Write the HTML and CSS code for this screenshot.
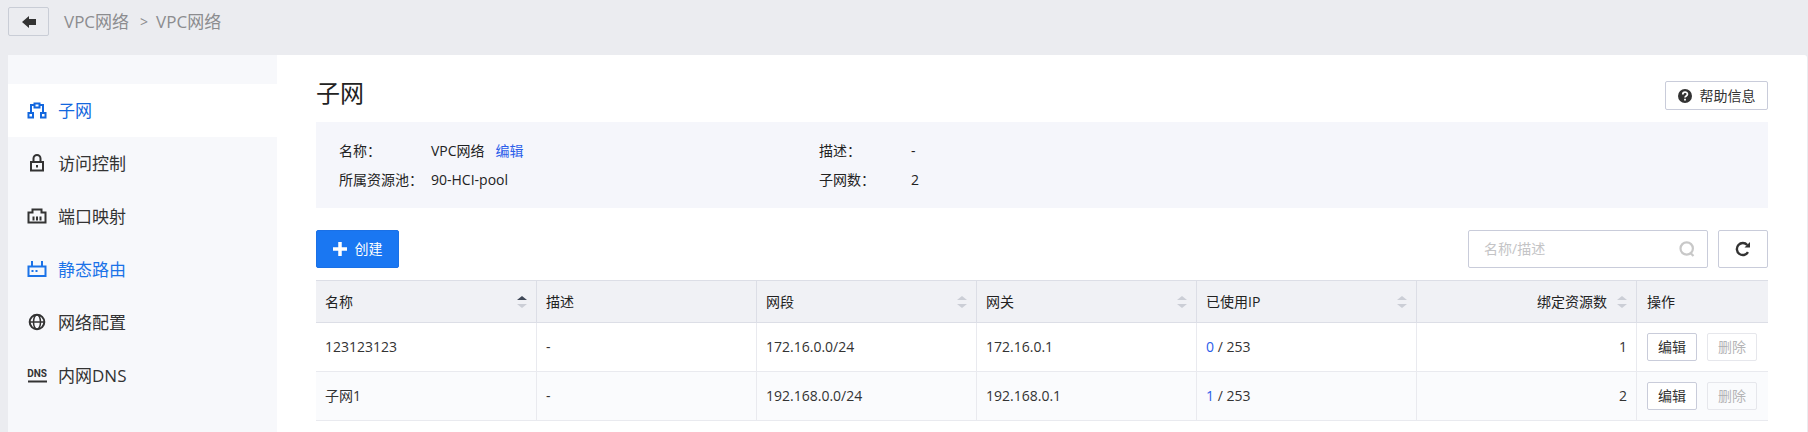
FILE: index.html
```html
<!DOCTYPE html>
<html lang="zh-CN">
<head>
    <meta charset="UTF-8">
    <meta name="viewport" content="width=device-width, initial-scale=1.0">
    <title>VPC网络</title>
    <link rel="stylesheet" href="styles.css">
</head>
<body>
    <header class="topbar">
        <button class="back-button" type="button" aria-label="返回">
            <svg width="14" height="12" viewBox="0 0 14 12"><path d="M0 6L7 0v3h7v6H7v3z" fill="#333"/></svg>
        </button>
        <nav class="breadcrumb">
            <a href="#">VPC网络</a>
            <span class="separator">&gt;</span>
            <span>VPC网络</span>
        </nav>
    </header>

    <div class="page">
        <nav class="sidebar">
            <a class="menu-item active" href="#">
                <svg class="menu-icon" viewBox="0 0 20 20" fill="none" stroke="currentColor" stroke-width="2"><path d="M7.500 2.500h5v4h-5zM1.500 12h4.500v4.500H1.500zM14 12h4.500v4.500H14zM7.500 4H4v8M12.500 4H16v8"/></svg>
                子网
            </a>
            <a class="menu-item" href="#">
                <svg class="menu-icon" viewBox="0 0 20 20" fill="none" stroke="currentColor" stroke-width="2"><path d="M4 8h12v8.500H4zM6.500 8V4.500a3.500 3.500 0 0 1 7 0V8"/><path d="M9 11h2v2.500H9z" fill="currentColor" stroke="none"/></svg>
                访问控制
            </a>
            <a class="menu-item" href="#">
                <svg class="menu-icon" viewBox="0 0 20 20" fill="none" stroke="currentColor" stroke-width="2"><path d="M1.500 15.500V5.500h4v-3h9v3h4v10z"/><path d="M6.500 9.500v4M10 9.500v4M13.500 9.500v4"/></svg>
                端口映射
            </a>
            <a class="menu-item hover" href="#">
                <svg class="menu-icon" viewBox="0 0 20 20" fill="none" stroke="currentColor" stroke-width="2"><path d="M1.500 6.500h17v9.500h-17zM5 1v5M15 1v5"/><path d="M4.500 10h2v2h-2zM8.500 10h2v2h-2z" fill="currentColor" stroke="none"/></svg>
                静态路由
            </a>
            <a class="menu-item" href="#">
                <svg class="menu-icon" viewBox="0 0 20 20" fill="none" stroke="currentColor" stroke-width="1.500"><circle cx="10" cy="9" r="7.300" stroke-width="2"/><ellipse cx="10" cy="9" rx="3.500" ry="7.300"/><path d="M3 9h14"/></svg>
                网络配置
            </a>
            <a class="menu-item" href="#">
                <svg class="menu-icon" viewBox="0 0 20 20"><text class="dns-text" x="10" y="11" text-anchor="middle">DNS</text><path d="M1 14.500h19v2H1z" fill="currentColor"/></svg>
                内网DNS
            </a>
        </nav>

        <main class="content">
            <div class="title-row">
                <h1>子网</h1>
                <button class="help-button" type="button">
                    <svg width="14" height="14" viewBox="0 0 14 14"><circle cx="7" cy="7" r="7" fill="#333"/><path d="M4.800 5.400c0-3 4.600-3 4.600-.2C9.400 7 7 6.800 7 8.600M7 9.800v1.800" fill="none" stroke="#fff" stroke-width="1.800"/></svg>
                    帮助信息
                </button>
            </div>

            <dl class="info">
                <div class="info-item"><dt>名称：</dt><dd>VPC网络<a href="#">编辑</a></dd></div>
                <div class="info-item"><dt>描述：</dt><dd>-</dd></div>
                <div class="info-item"><dt>所属资源池：</dt><dd>90-HCI-pool</dd></div>
                <div class="info-item"><dt>子网数：</dt><dd>2</dd></div>
            </dl>

            <div class="toolbar">
                <button class="create-button" type="button">
                    <svg width="14" height="14" viewBox="0 0 14 14"><path d="M7 0v14M0 7h14" stroke="#fff" stroke-width="3.500"/></svg>
                    创建
                </button>
                <label class="search">
                    <input type="text" placeholder="名称/描述" aria-label="名称/描述">
                    <svg width="16" height="16" viewBox="0 0 16 16" fill="none" stroke="#c8c8c8" stroke-width="2.200"><circle cx="7.700" cy="7.500" r="6.200"/><path d="M11 11.500l3.500 3.500"/></svg>
                </label>
                <button class="refresh-button" type="button" aria-label="刷新">
                    <svg width="16" height="16" viewBox="0 0 16 16"><path d="M12.300 4A6 6 0 1 0 13 11.200" fill="none" stroke="#333" stroke-width="2.400"/><path d="M15 1v5.500H9.500z" fill="#333"/></svg>
                </button>
            </div>

            <table class="subnet-table">
                <thead>
                    <tr>
                        <th class="col-name"><div class="th-inner">名称<span class="sort asc"></span></div></th>
                        <th>描述</th>
                        <th><div class="th-inner">网段<span class="sort"></span></div></th>
                        <th><div class="th-inner">网关<span class="sort"></span></div></th>
                        <th><div class="th-inner">已使用IP<span class="sort"></span></div></th>
                        <th><div class="th-inner right">绑定资源数<span class="sort"></span></div></th>
                        <th class="col-action">操作</th>
                    </tr>
                </thead>
                <tbody>
                    <tr>
                        <td>123123123</td>
                        <td>-</td>
                        <td>172.16.0.0/24</td>
                        <td>172.16.0.1</td>
                        <td><a href="#">0</a> / 253</td>
                        <td class="number">1</td>
                        <td>
                            <div class="actions">
                                <button type="button">编辑</button>
                                <button type="button" disabled>删除</button>
                            </div>
                        </td>
                    </tr>
                    <tr>
                        <td>子网1</td>
                        <td>-</td>
                        <td>192.168.0.0/24</td>
                        <td>192.168.0.1</td>
                        <td><a href="#">1</a> / 253</td>
                        <td class="number">2</td>
                        <td>
                            <div class="actions">
                                <button type="button">编辑</button>
                                <button type="button" disabled>删除</button>
                            </div>
                        </td>
                    </tr>
                </tbody>
            </table>
        </main>
    </div>
</body>
</html>
```
FILE: styles.css
```css
* {
    box-sizing: border-box;
}
body {
    margin: 0;
    min-height: 100vh;
    display: flex;
    flex-direction: column;
    background: #ebecf0;
    color: #333;
    font-family: "Open Sans", "Noto Sans CJK SC", sans-serif;
    font-size: 14px;
    line-height: 20px;
}
a {
    color: #2b5eea;
    text-decoration: none;
}
button,
input {
    font: inherit;
    color: inherit;
}
button {
    display: flex;
    align-items: center;
    justify-content: center;
    padding: 0;
    background: #fff;
    border: 1px solid #c9ccda;
    border-radius: 2px;
    cursor: pointer;
}

/* Top bar */
.topbar {
    display: flex;
    align-items: center;
    height: 55px;
    padding: 0 8px 12px;
}
.back-button {
    width: 41px;
    height: 29px;
    background: transparent;
    border-color: #c9cdd6;
}
.breadcrumb {
    display: flex;
    gap: 8px;
    margin-left: 15px;
    font-size: 17px;
    color: #8c8c8f;
}
.breadcrumb a {
    color: inherit;
}
.breadcrumb .separator {
    margin-left: 3px;
    font-size: 14px;
}

/* Layout */
.page {
    flex: 1;
    display: flex;
    margin: 0 1px 0 8px;
    background: #fff;
    border-top-right-radius: 3px;
}
.sidebar {
    flex: 0 0 269px;
    padding-top: 29px;
    background: #f7f8fb;
}
.menu-item {
    display: flex;
    align-items: center;
    gap: 11px;
    height: 53px;
    padding-left: 19px;
    font-size: 17px;
    color: #333;
}
.menu-item.active {
    background: #fff;
    color: #1367de;
}
.menu-item.hover {
    color: #1b73e8;
}
.menu-icon {
    width: 20px;
    height: 20px;
}
.dns-text {
    font: bold 10px Roboto, sans-serif;
    fill: currentColor;
}
.content {
    flex: 1;
    padding: 20px 39px 0;
}

/* Title and info */
.title-row {
    display: flex;
    align-items: flex-start;
    justify-content: space-between;
    height: 47px;
}
h1 {
    margin: 0;
    font-size: 24px;
    line-height: 36px;
    font-weight: normal;
    color: #222;
}
.help-button {
    gap: 8px;
    width: 103px;
    height: 29px;
    margin-top: 6px;
}
.info {
    display: grid;
    grid-template-columns: 480px 1fr;
    margin: 0;
    padding: 14px 0 14px 23px;
    background: #f5f6fb;
    color: #222;
}
.info-item {
    display: flex;
    line-height: 29px;
}
.info dt {
    width: 92px;
}
.info dd {
    margin: 0;
}
.info a {
    margin-left: 11px;
}

/* Toolbar */
.toolbar {
    display: flex;
    gap: 10px;
    margin: 22px 0 12px;
}
.create-button {
    gap: 8px;
    width: 83px;
    height: 38px;
    background: #1a77f2;
    border-color: #1a70e6;
    color: #fff;
}
.search {
    display: flex;
    align-items: center;
    width: 240px;
    height: 38px;
    margin-left: auto;
    padding: 0 12px 0 15px;
    border: 1px solid #c9ccda;
    border-radius: 2px;
}
.search input {
    flex: 1;
    min-width: 0;
    padding: 0;
    border: 0;
    outline: none;
    background: transparent;
}
.search input::placeholder {
    color: #c4c4c6;
}
.refresh-button {
    width: 50px;
    height: 38px;
}

/* Table */
.subnet-table {
    width: 100%;
    table-layout: fixed;
    border-collapse: separate;
    border-spacing: 0;
    border-top: 1px solid #dcdee6;
}
.subnet-table th,
.subnet-table td {
    padding: 0 9px;
    text-align: left;
    font-weight: normal;
    border-right: 1px solid #e9eaef;
    border-bottom: 1px solid #e9eaef;
}
.subnet-table th {
    height: 42px;
    background: #f0f1f5;
    border-color: #dcdee6;
    color: #222;
}
.subnet-table td {
    height: 49px;
}
.subnet-table th:last-child,
.subnet-table td:last-child {
    padding-left: 10px;
    border-right: 0;
}
.subnet-table tbody tr:nth-child(even) {
    background: #fafbfd;
}
.subnet-table .col-name {
    width: 221px;
}
.subnet-table .col-action {
    width: 131px;
}
.subnet-table .number {
    text-align: right;
}
.th-inner {
    display: flex;
    align-items: center;
    justify-content: space-between;
}
.th-inner.right {
    justify-content: flex-end;
    gap: 10px;
}
.sort {
    display: flex;
    flex-direction: column;
    gap: 4px;
}
.sort::before,
.sort::after {
    content: "";
    border: 5px solid transparent;
}
.sort::before {
    border-top: 0;
    border-bottom: 4px solid #cbced6;
}
.sort::after {
    border-bottom: 0;
    border-top: 4px solid #cbced6;
}
.sort.asc::before {
    border-bottom-color: #3f4757;
}
.actions {
    display: flex;
    gap: 10px;
}
.actions button {
    width: 50px;
    height: 28px;
}
.actions button:disabled {
    background: transparent;
    border-color: #e6e7ec;
    color: #b4b4b6;
    cursor: default;
}
```
